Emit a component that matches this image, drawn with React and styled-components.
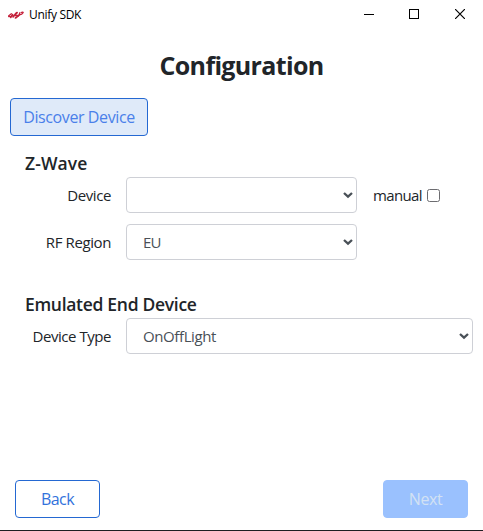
import React from "react";
import styled, { createGlobalStyle } from "styled-components";

const GlobalStyle = createGlobalStyle`
  *, *::before, *::after { box-sizing: border-box; }
  body { margin: 0; background: #fff; }
`;

const Window = styled.div`
  width: 483px;
  height: 531px;
  display: flex;
  flex-direction: column;
  overflow: hidden;
  background: #fff;
  border-bottom: 1px solid #1d1f21;
  color: #212529;
  font-family: "Open Sans", "Noto Sans", sans-serif;
  font-size: 15px;
  font-weight: 400;
`;

const TitleBar = styled.header`
  display: flex;
  align-items: center;
  height: 30px;
  padding-left: 8px;
  flex: none;
`;

const AppName = styled.span`
  margin-left: 5px;
  flex: 1;
  color: #000;
  font-size: 12px;
  font-weight: 400;
  line-height: 16px;
  letter-spacing: -0.32px;
`;

const WindowButton = styled.button`
  width: ${(p) => p.$width || 46}px;
  height: 30px;
  padding: 0 0 2px;
  border: 0;
  background: none;
  display: flex;
  align-items: center;
  justify-content: center;
`;

const Title = styled.h1`
  margin: 17px 0 0;
  height: 36px;
  line-height: 36px;
  text-align: center;
  font-size: 25px;
  font-weight: 700;
  letter-spacing: -0.66px;
`;

const Content = styled.main`
  flex: 1;
  padding: 15px 10px 0;
`;

const Button = styled.button`
  width: ${(p) => p.$width}px;
  height: 38px;
  padding: 0;
  border: 1px solid ${(p) => (p.$filled ? "#9ac1fe" : "#2468d2")};
  border-radius: 4px;
  background: ${(p) => (p.$filled ? "#9ac1fe" : p.$tinted ? "#dfeaf9" : "#fff")};
  color: ${(p) => (p.$filled ? "#d3e1f3" : p.$tinted ? "#4a80ea" : "#3272dc")};
  font-family: inherit;
  font-size: 16px;
  font-weight: inherit;
  line-height: 24px;
  letter-spacing: ${(p) => p.$spacing || 0}px;
`;

const Section = styled.section`
  margin-top: ${(p) => p.$top}px;
`;

const SectionTitle = styled.h2`
  margin: 0 0 2px 15px;
  height: 24px;
  line-height: 24px;
  font-size: 17.5px;
  font-weight: 600;
  letter-spacing: ${(p) => p.$spacing}px;
`;

const Row = styled.div`
  display: grid;
  grid-template-columns: 101px ${(p) => (p.$wide ? "347px" : "231px auto")};
  column-gap: 15px;
  align-items: center;
  height: 36px;
  margin-bottom: 11px;
`;

const Label = styled.label`
  text-align: right;
  line-height: 22px;
  letter-spacing: ${(p) => p.$spacing}px;
`;

const Select = styled.div`
  height: 36px;
  padding: 0 3px 0 16px;
  display: flex;
  align-items: center;
  justify-content: space-between;
  border: 1px solid #ced0d6;
  border-radius: 4px;
  color: #495057;
  letter-spacing: ${(p) => p.$spacing || 0}px;
`;

const CheckField = styled.label`
  display: flex;
  align-items: center;
  gap: 5px;
  padding-left: 1px;
  letter-spacing: -0.64px;
`;

const Checkbox = styled.input`
  appearance: none;
  width: 13px;
  height: 13px;
  margin: 0;
  border: 1px solid #6c6c70;
  border-radius: 2.5px;
  background: #fff;
`;

const Footer = styled.footer`
  display: flex;
  justify-content: space-between;
  padding: 0 15px 12px;
`;

function Logo() {
  return (
    <svg width="16" height="12" viewBox="0 0 16 12" fill="none" stroke="#c4203a" strokeLinecap="round" strokeLinejoin="round">
      <path d="M3.300 4.700 .8 6.700C-.1 7.900 2 8 3.500 7.200L5.500 6.300" strokeWidth="1.200" />
      <path d="M2.700 8.500 4.500 5.500M5 8C6.300 7.400 6.800 4.600 8.600 3.600M9.200 3.600 6.800 5.900 9.400 6.400 7.400 9M7.400 9C9.200 8.600 9.600 6.700 11.400 5.900" strokeWidth="1.500" />
      <path d="M11.800 3.700 10.500 7.200M11.300 5.800 13.800 5.200 15.200 3.600C15.400 2.700 13.900 3 13.200 3.500" strokeWidth="1.200" />
    </svg>
  );
}

function Chevron() {
  return (
    <svg width="10" height="8" viewBox="0 0 10 8" fill="none" stroke="#495057" strokeWidth="2.3">
      <path d="M1 2 5 5.700 9 2" />
    </svg>
  );
}

function WindowControls() {
  return (
    <>
      <WindowButton aria-label="Minimize" $width={45}>
        <svg width="10" height="10" stroke="#000" shapeRendering="crispEdges"><path d="M0 5.500H10" /></svg>
      </WindowButton>
      <WindowButton aria-label="Maximize">
        <svg width="10" height="10" fill="none" stroke="#000"><rect x=".5" y=".5" width="9" height="9" /></svg>
      </WindowButton>
      <WindowButton aria-label="Close">
        <svg width="10" height="10" stroke="#000" strokeWidth="1.200"><path d="M0 0 10 10M10 0 0 10" /></svg>
      </WindowButton>
    </>
  );
}

export default function App() {
  return (
    <Window>
      <GlobalStyle />
      <TitleBar>
        <Logo />
        <AppName>Unify SDK</AppName>
        <WindowControls />
      </TitleBar>
      <Title>Configuration</Title>
      <Content>
        <Button $width={138} $tinted $spacing={-0.4}>Discover Device</Button>
        <Section $top={15}>
          <SectionTitle $spacing={0.1}>Z-Wave</SectionTitle>
          <Row>
            <Label $spacing={-0.4}>Device</Label>
            <Select><span /><Chevron /></Select>
            <CheckField>manual<Checkbox type="checkbox" /></CheckField>
          </Row>
          <Row>
            <Label $spacing={-0.4}>RF Region</Label>
            <Select $spacing={-0.9}><span>EU</span><Chevron /></Select>
          </Row>
        </Section>
        <Section $top={32}>
          <SectionTitle $spacing={-0.3}>Emulated End Device</SectionTitle>
          <Row $wide>
            <Label $spacing={-0.45}>Device Type</Label>
            <Select $spacing={-0.4}><span>OnOffLight</span><Chevron /></Select>
          </Row>
        </Section>
      </Content>
      <Footer>
        <Button $width={85} $spacing={-0.6}>Back</Button>
        <Button $width={85} $filled disabled $spacing={-0.4}>Next</Button>
      </Footer>
    </Window>
  );
}
